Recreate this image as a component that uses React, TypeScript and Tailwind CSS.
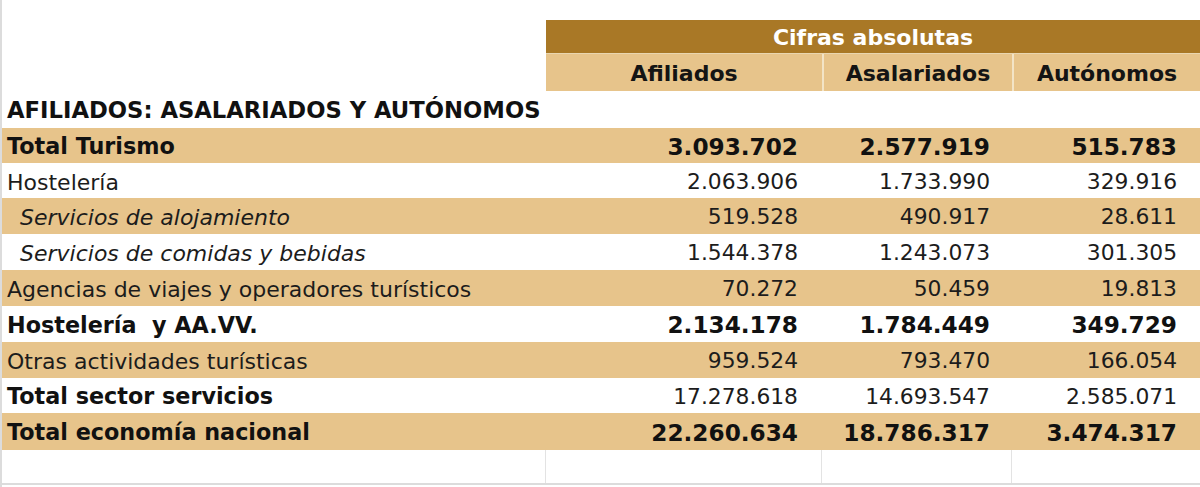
import React from "react";

type Row = {
  label: string;
  values: [string, string, string];
  tan: boolean;
  labelBold?: boolean;
  numBold?: boolean;
  italic?: boolean;
  h: string;
};

const rows: Row[] = [
  { label: "Total Turismo", values: ["3.093.702", "2.577.919", "515.783"], tan: true, labelBold: true, numBold: true, h: "h-[35px]" },
  { label: "Hostelería", values: ["2.063.906", "1.733.990", "329.916"], tan: false, h: "h-[35px]" },
  { label: "Servicios de alojamiento", values: ["519.528", "490.917", "28.611"], tan: true, italic: true, h: "h-[36px]" },
  { label: "Servicios de comidas y bebidas", values: ["1.544.378", "1.243.073", "301.305"], tan: false, italic: true, h: "h-[36px]" },
  { label: "Agencias de viajes y operadores turísticos", values: ["70.272", "50.459", "19.813"], tan: true, h: "h-[36px]" },
  { label: "Hostelería  y AA.VV.", values: ["2.134.178", "1.784.449", "349.729"], tan: false, labelBold: true, numBold: true, h: "h-[36px]" },
  { label: "Otras actividades turísticas", values: ["959.524", "793.470", "166.054"], tan: true, h: "h-[36px]" },
  { label: "Total sector servicios", values: ["17.278.618", "14.693.547", "2.585.071"], tan: false, labelBold: true, h: "h-[35px]" },
  { label: "Total economía nacional", values: ["22.260.634", "18.786.317", "3.474.317"], tan: true, labelBold: true, numBold: true, h: "h-[37px]" },
];

const colW = ["w-[546px]", "w-[276px]", "w-[190px]", "w-[188px]"];
const numPad = ["pr-[24px]", "pr-[22px]", "pr-[23px]"];

export default function App() {
  return (
    <div
      className="w-[1200px] h-[487px] bg-white overflow-hidden flex flex-col border-l-2 border-[#dcdcdc] text-[#1c1c1c]"
      style={{ fontFamily: '"DejaVu Sans", Verdana, sans-serif' }}
    >
      {/* top spacer */}
      <div className="h-[20px] shrink-0" />
      {/* Cifras absolutas band */}
      <div className="flex h-[33px] shrink-0">
        <div className="w-[544px]" />
        <div className="flex-1 bg-[#A97826] flex items-center justify-center pt-[2px] text-white font-bold text-[22px]">
          Cifras absolutas
        </div>
      </div>
      {/* sub header */}
      <div className="flex h-[38px] shrink-0">
        <div className="w-[544px]" />
        <div className="flex-1 flex border-t border-[#e9d6b0]">
          <div className="w-[276px] bg-[#E7C48B] flex items-center justify-center pt-[2px] font-bold text-[22px] text-[#141414]">
            Afiliados
          </div>
          <div className="w-[190px] bg-[#E7C48B] border-l-2 border-[#f3e4c6] flex items-center justify-center pt-[2px] font-bold text-[22px] text-[#141414]">
            Asalariados
          </div>
          <div className="flex-1 bg-[#E7C48B] border-l-2 border-[#f3e4c6] flex items-center justify-center pt-[2px] font-bold text-[22px] text-[#141414]">
            Autónomos
          </div>
        </div>
      </div>
      {/* section title */}
      <div className="flex h-[37px] shrink-0 items-center pl-[5px] pt-[2px] font-bold text-[22.7px] text-[#111]">
        AFILIADOS: ASALARIADOS Y AUTÓNOMOS
      </div>
      {rows.map((r, i) => (
        <div key={i} className={`flex ${r.h} shrink-0 ${r.tan ? "bg-[#E7C48B]" : "bg-white"}`}>
          <div
            className={`w-[544px] flex items-center pt-[3px] whitespace-pre ${r.italic ? "italic pl-[18px]" : "pl-[5px]"} ${
              r.labelBold ? "font-bold text-[22.3px] text-[#111]" : "text-[22px]"
            }`}
          >
            {r.label}
          </div>
          {r.values.map((v, j) => (
            <div
              key={j}
              className={`${j === 2 ? "flex-1" : colW[j + 1]} flex items-center justify-end pt-[3px] ${numPad[j]} ${
                r.numBold ? "font-bold text-[23.2px] text-[#111]" : "text-[21.8px]"
              }`}
            >
              {v}
            </div>
          ))}
        </div>
      ))}
      {/* empty row */}
      <div className="flex h-[35px] shrink-0 border-b-2 border-[#dcdcdc]">
        <div className="w-[544px] border-r border-[#e3e3e3]" />
        <div className="w-[276px] border-r border-[#e3e3e3]" />
        <div className="w-[190px] border-r border-[#e3e3e3]" />
        <div className="flex-1" />
      </div>
    </div>
  );
}
